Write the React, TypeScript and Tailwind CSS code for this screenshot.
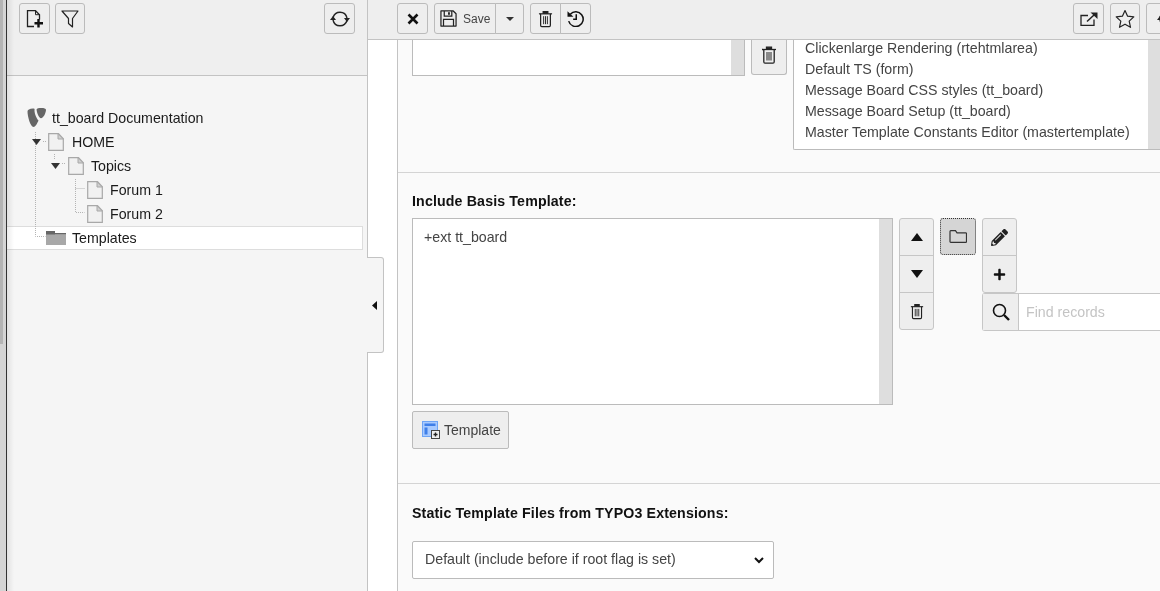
import type { ReactNode } from 'react';
import { FaPencilAlt, FaPlus } from 'react-icons/fa';

// ---------------------------------------------------------------------------
// Icons
// ---------------------------------------------------------------------------

function TrashIcon({ className = 'w-[16px] h-[18px]' }: { className?: string }) {
  return (
    <svg viewBox="0 0 16 18" className={className} fill="none" stroke="#222" strokeWidth="1.3">
      <path d="M1 3.5h14" />
      <path d="M5.5 3.5V1.2h5v2.3" fill="#222" />
      <path d="M2.8 3.5v12.2c0 .8.5 1.5 1.2 1.5h8c.7 0 1.2-.7 1.2-1.5V3.5" />
      <path d="M6 6v8.5M8 6v8.5M10 6v8.5" strokeWidth="1" />
    </svg>
  );
}

function NewPageIcon() {
  return (
    <svg viewBox="0 0 18 18" className="w-[18px] h-[18px]" fill="none">
      <path d="M8 16.500H1.500V.7h8l4 4v4.800" stroke="#222" strokeWidth="1.300" />
      <path d="M9.500.7v4h4" stroke="#222" strokeWidth="1" />
      <path d="M12.500 9v8.500M8.500 13.300h8.500" stroke="#111" strokeWidth="2.400" />
    </svg>
  );
}

function FilterIcon() {
  return (
    <svg viewBox="0 0 18 18" className="w-[18px] h-[18px]" fill="none" stroke="#222" strokeWidth="1.200">
      <path d="M1 1h16l-5.500 7.500v8.500L7.500 13.500V8.500z" strokeLinejoin="round" />
    </svg>
  );
}

function ShareIcon() {
  return (
    <svg viewBox="0 0 18 14" className="w-[18px] h-[14px]" fill="none" stroke="#222">
      <path d="M8 3.500H1v10h13V7.500" strokeWidth="1.300" />
      <path d="M7 9.500l7-6.500" strokeWidth="1.500" />
      <path d="M10.500 0.500h7v6.500z" fill="#222" stroke="none" />
    </svg>
  );
}

function SyncIcon() {
  return (
    <svg viewBox="0 0 20 16" className="w-[20px] h-[16px]" fill="none" stroke="#222" strokeWidth="1.400">
      <path d="M3 6.500C4 3.300 6.800 1.200 10 1.200c3.300 0 6.200 2.300 7 5.800" />
      <path d="M17 9.500c-1 3.200-3.800 5.300-7 5.300-3.300 0-6.200-2.300-7-5.800" />
      <path d="M14 7h6l-3 4zM0 9h6L3 5z" fill="#222" stroke="none" />
    </svg>
  );
}

function SaveIcon() {
  return (
    <svg viewBox="0 0 18 18" className="w-[17px] h-[17px] shrink-0" fill="none" stroke="#222" strokeWidth="1.300">
      <path d="M1 1h13l3 3v13H1z" strokeLinejoin="round" />
      <path d="M4.500 1v5.500h8V1" />
      <path d="M9.500 2.500v2.500" strokeWidth="2" />
      <path d="M3.700 17v-7h10.600v7" />
    </svg>
  );
}

function HistoryIcon() {
  return (
    <svg viewBox="0 0 18 18" className="w-[17px] h-[17px]" fill="none" stroke="#111" strokeWidth="1.600">
      <path d="M3.500 4.500A7.800 7.800 0 1 1 1.800 11.800" />
      <path d="M0.500 1.200l6.300 6H0.500z" fill="#111" stroke="none" />
      <path d="M9.800 4.500v5.300H6.500" />
    </svg>
  );
}

function StarIcon() {
  return (
    <svg viewBox="0 0 20 20" className="w-[20px] h-[20px]" fill="none" stroke="#222" strokeWidth="1.200">
      <path d="M10 1.500l2.600 5.700 6.200.7-4.600 4.200 1.300 6.200L10 15.200l-5.500 3.100 1.300-6.200-4.600-4.200 6.200-.7z" strokeLinejoin="round" />
    </svg>
  );
}

function FolderOutline() {
  return (
    <svg viewBox="0 0 18 13" className="w-[18px] h-[13px]" fill="none" stroke="#333" strokeWidth="1.200">
      <path d="M1 1.500c0-.5.300-.9.800-.9h4.700l1.500 2.200h8.700c.5 0 .8.300.8.800v8c0 .5-.3.800-.8.800H1.800c-.5 0-.8-.3-.8-.8z" />
    </svg>
  );
}

function SearchIcon() {
  return (
    <svg viewBox="0 0 18 18" className="w-[18px] h-[18px]" fill="none" stroke="#111">
      <circle cx="7.500" cy="7.500" r="6" strokeWidth="1.600" />
      <path d="M12 12l5 5" strokeWidth="2.400" />
    </svg>
  );
}

function PageIcon() {
  return (
    <svg viewBox="0 0 16 18" className="w-[16px] h-[18px] shrink-0">
      <path d="M.7.700h9.800l4.800 5v11.600H.7z" fill="#f1f1f1" stroke="#a8a8a8" strokeWidth="1.200" />
      <path d="M10 .700v5.300h5.300z" fill="#cfcfcf" stroke="#a8a8a8" />
    </svg>
  );
}

function FolderIcon() {
  return (
    <svg viewBox="0 0 20 14" className="w-[20px] h-[14px] shrink-0">
      <path d="M0 0h9v3h11v11H0z" fill="#a8a8a8" />
      <path d="M0 0h9v3.500H0z" fill="#666" />
      <path d="M9 2h11v1.200H9z" fill="#666" />
    </svg>
  );
}

function Typo3Icon() {
  return (
    <svg viewBox="0 0 20 20" className="w-[20px] h-[20px] shrink-0" fill="#666">
      <path d="M.5 3.500C.5 2 2.500.8 6 .6c1 0 1.600.2 1.600.6C7 4 9 10 11.500 12.500c-1.400 3.200-3.200 6.500-5 6.500C3.500 19 .5 8.500.5 3.500z" />
      <path d="M9.600 1.200C10 .4 11.500 0 14.500 0c2.500 0 4.500.6 4.500 1.800 0 3-2.500 8.500-5 8.500-2 0-4.400-6.200-4.400-9.100z" />
    </svg>
  );
}

function TemplateIcon() {
  return (
    <svg viewBox="0 0 18 18" className="w-[18px] h-[18px]">
      <rect x="0.500" y="0.500" width="15" height="15" fill="#a9cbff" stroke="#6ea4f5" />
      <path d="M2.500 2.500h11v2.500h-11zM2.500 6.500h3v7h-3z" fill="#3f7fe8" />
      <rect x="9.500" y="9.500" width="8" height="8" fill="#eee" stroke="#444" />
      <path d="M13.500 11.500v4M11.500 13.500h4" stroke="#222" strokeWidth="1.400" />
    </svg>
  );
}

function Triangle({ down = false }: { down?: boolean }) {
  return (
    <svg viewBox="0 0 12 8" className="w-[12px] h-[8px]" fill="#111">
      <path d={down ? 'M0 0h12L6 8z' : 'M0 8h12L6 0z'} />
    </svg>
  );
}

function TreeToggle() {
  return (
    <svg viewBox="0 0 9 6" className="w-[9px] h-[6px]" fill="#333">
      <path d="M0 0h9L4.500 6z" />
    </svg>
  );
}

// ---------------------------------------------------------------------------
// Small parts
// ---------------------------------------------------------------------------

function ToolButton({ children, className = 'w-[31px]' }: { children: ReactNode; className?: string }) {
  return (
    <button className={`h-[31px] flex items-center justify-center bg-[#eeeeee] border border-[#bbbbbb] rounded-[3px] text-[#222] shrink-0 ${className}`}>
      {children}
    </button>
  );
}

function TreeRow({ depth, label, icon, selected }: { depth: string; label: string; icon: ReactNode; selected?: boolean }) {
  return (
    <div className={`h-[24px] flex items-center ${depth} ${selected ? 'bg-white border-y border-r border-[#dddddd] mr-[4px]' : ''}`}>
      {icon}
      <span className="pt-[2px] text-[14.200px] text-[#1a1a1a]">{label}</span>
    </div>
  );
}

// ---------------------------------------------------------------------------
// App
// ---------------------------------------------------------------------------

export default function App() {
  return (
    <div className="relative flex w-[1160px] h-[591px] overflow-hidden bg-white font-['Liberation_Sans',Arial,sans-serif]">
      {/* Window edge */}
      <div className="flex w-[7px] shrink-0 bg-[#d4d4d4]">
        <div className="w-[3px] h-[344px] bg-[#b4b4b4]" />
        <div className="flex-1" />
        <div className="w-[1px] bg-[#333333]" />
      </div>

      {/* Page tree */}
      <div className="flex flex-col w-[361px] shrink-0 border-r border-[#c3c3c3] bg-[#f5f5f5]">
        <div className="h-[72px] shrink-0 flex items-start justify-between pl-[12px] pr-[12px] pt-[3px] bg-[#efefef] border-b border-[#c3c3c3] box-content">
          <div className="flex gap-[5px]">
            <ToolButton><NewPageIcon /></ToolButton>
            <ToolButton className="w-[30px]"><FilterIcon /></ToolButton>
          </div>
          <ToolButton><SyncIcon /></ToolButton>
        </div>

        <div className="relative pt-[30px]">
          <svg className="absolute left-0 top-0 w-[120px] h-[170px]" fill="none" stroke="#b4b4b4" strokeDasharray="1 1">
            <path d="M28.500 56v104.500h10M36 65.500h4M47.500 78v6M55 87.500h4M68.500 103v33.500h9M68.500 112.500h9" />
          </svg>
          <TreeRow depth="pl-[20px] gap-[5px]" label="tt_board Documentation" icon={<Typo3Icon />} />
          <div className="relative">
            <div className="absolute left-[25px] top-[9px] flex"><TreeToggle /></div>
            <TreeRow depth="pl-[41px] gap-[8px]" label="HOME" icon={<PageIcon />} />
          </div>
          <div className="relative">
            <div className="absolute left-[44px] top-[9px] flex"><TreeToggle /></div>
            <TreeRow depth="pl-[61px] gap-[7px]" label="Topics" icon={<PageIcon />} />
          </div>
          <TreeRow depth="pl-[80px] gap-[7px]" label="Forum 1" icon={<PageIcon />} />
          <TreeRow depth="pl-[80px] gap-[7px]" label="Forum 2" icon={<PageIcon />} />
          <TreeRow depth="pl-[39px] gap-[6px]" label="Templates" icon={<FolderIcon />} selected />
        </div>
      </div>

      {/* Shadow over the tree's left edge */}
      <div className="absolute left-[7px] top-0 w-[7px] h-full pointer-events-none mix-blend-multiply bg-linear-to-r from-[#ececec] to-white" />

      {/* Collapse handle */}
      <div className="absolute left-[367px] top-[257px] w-[17px] h-[96px] flex items-center justify-end pr-[6px] bg-[#f5f5f5] border border-l-0 border-[#c3c3c3] rounded-r-[3px]">
        <svg viewBox="0 0 5 9" className="w-[5px] h-[9px]" fill="#111"><path d="M5 0v9L0 4.500z" /></svg>
      </div>

      {/* Main column */}
      <div className="flex flex-col flex-1 min-w-0">
        <div className="h-[40px] shrink-0 flex items-start justify-between pl-[29px] pt-[3px] bg-[#eeeeee] border-b border-[#c3c3c3] overflow-hidden">
          <div className="flex gap-[6px]">
            <ToolButton>
              <svg viewBox="0 0 12 12" className="w-[12px] h-[12px]" fill="none" stroke="#111" strokeWidth="2.600"><path d="M1.500 1.500l9 9M10.500 1.500l-9 9" /></svg>
            </ToolButton>
            <div className="flex">
              <button className="h-[31px] w-[62px] flex items-center gap-[6px] pl-[5px] bg-[#eeeeee] border border-[#bbbbbb] rounded-l-[3px] text-[12px] text-[#444]">
                <SaveIcon />
                <span>Save</span>
              </button>
              <button className="h-[31px] w-[29px] -ml-px flex items-center justify-center bg-[#eeeeee] border border-[#bbbbbb] rounded-r-[3px]">
                <svg viewBox="0 0 8 4" className="w-[8px] h-[4px]" fill="#333"><path d="M0 0h8L4 4z" /></svg>
              </button>
            </div>
            <div className="flex">
              <ToolButton className="w-[31px] rounded-r-none"><TrashIcon className="w-[15px] h-[18px]" /></ToolButton>
              <ToolButton className="w-[31px] -ml-px rounded-l-none"><HistoryIcon /></ToolButton>
            </div>
          </div>
          <div className="flex gap-[6px] -mr-[28px]">
            <ToolButton><ShareIcon /></ToolButton>
            <ToolButton className="w-[30px]"><StarIcon /></ToolButton>
            <ToolButton className="w-[42px]"><SyncIcon /></ToolButton>
          </div>
        </div>

        <div className="flex flex-1 min-h-0">
          <div className="w-[29px] shrink-0 bg-white border-r border-[#c3c3c3] box-content" />
          <div className="flex-1 min-w-0 bg-[#fafafa] overflow-hidden">
            {/* Clipped first field */}
            <div className="h-[133px] flex items-start gap-[6px] pl-[14px] border-b border-[#d4d4d4]">
              <div className="flex h-[36px] w-[333px] shrink-0 bg-white border-x border-b border-[#bbbbbb]">
                <div className="flex-1" />
                <div className="w-[13px] bg-[#dedede]" />
              </div>
              <button className="h-[35px] w-[36px] shrink-0 flex items-center justify-center pb-[4px] bg-[#eeeeee] border-x border-b border-[#bbbbbb] rounded-b-[3px]">
                <TrashIcon />
              </button>
              <div className="flex h-[110px] flex-1 min-w-0 -mr-[10px] bg-white border-l border-b border-[#bbbbbb] rounded-bl-[2px]">
                <div className="flex-1 pl-[11px] -mt-[2px] text-[14.200px] leading-[21px] text-[#444] whitespace-nowrap">
                  <div>Clickenlarge Rendering (rtehtmlarea)</div>
                  <div>Default TS (form)</div>
                  <div>Message Board CSS styles (tt_board)</div>
                  <div>Message Board Setup (tt_board)</div>
                  <div>Master Template Constants Editor (mastertemplate)</div>
                </div>
                <div className="w-[22px] shrink-0 bg-[#dedede]" />
              </div>
            </div>

            {/* Include Basis Template */}
            <div className="h-[311px] pl-[14px] pt-[20px] border-b border-[#d4d4d4]">
              <div className="h-[17px] text-[14.200px] tracking-[0.14px] leading-[17px] font-bold text-[#111]">Include Basis Template:</div>
              <div className="flex items-start mt-[8px]">
                <div className="flex h-[187px] w-[481px] shrink-0 bg-white border border-[#bbbbbb]">
                  <div className="flex-1 pl-[11px] pt-[9px] text-[14.200px] leading-[18px] text-[#444]">+ext tt_board</div>
                  <div className="w-[13px] bg-[#dedede]" />
                </div>
                <div className="flex flex-col w-[35px] ml-[6px] shrink-0 border border-[#c6c6c6] rounded-[3px] bg-[#eeeeee] divide-y divide-[#c6c6c6]">
                  <div className="h-[37px] flex items-center justify-center"><Triangle /></div>
                  <div className="h-[37px] flex items-center justify-center"><Triangle down /></div>
                  <div className="h-[36px] flex items-center justify-center"><TrashIcon className="w-[14px] h-[17px]" /></div>
                </div>
                <div className="w-[36px] h-[37px] ml-[6px] shrink-0 flex items-center justify-center bg-[#d5d5d5] border border-dotted border-[#333] rounded-[3px]">
                  <FolderOutline />
                </div>
                <div className="ml-[6px] flex-1 min-w-0">
                  <div className="flex flex-col w-[35px] border border-[#c6c6c6] rounded-[3px] bg-[#eeeeee] divide-y divide-[#c6c6c6]">
                    <div className="h-[37px] flex items-center justify-center"><FaPencilAlt className="w-[17px] h-[17px] text-[#222]" /></div>
                    <div className="h-[36px] flex items-center justify-center"><FaPlus className="w-[13px] h-[13px] text-[#111]" /></div>
                  </div>
                  <div className="flex h-[38px] -mr-[10px] bg-white border-y border-l border-[#c6c6c6] rounded-l-[3px]">
                    <div className="w-[36px] shrink-0 flex items-center justify-center bg-[#eeeeee] border-r border-[#c6c6c6]">
                      <SearchIcon />
                    </div>
                    <div className="flex-1 flex items-center pl-[7px] pt-[2px] text-[14.200px] text-[#c4c4c4]">Find records</div>
                  </div>
                </div>
              </div>
              <button className="h-[38px] w-[97px] mt-[6px] flex items-center gap-[4px] pl-[9px] bg-[#eeeeee] border border-[#bbbbbb] rounded-[2px] text-[14px] text-[#444]">
                <TemplateIcon />
                <span>Template</span>
              </button>
            </div>

            {/* Static templates */}
            <div className="pl-[14px] pt-[21px]">
              <div className="h-[17px] text-[14.200px] tracking-[0.14px] leading-[17px] font-bold text-[#111]">Static Template Files from TYPO3 Extensions:</div>
              <div className="flex items-center justify-between h-[38px] w-[362px] mt-[19px] pl-[12px] pr-[9px] bg-white border border-[#bbbbbb] rounded-[2px] text-[14.200px] text-[#444]">
                <span>Default (include before if root flag is set)</span>
                <svg viewBox="0 0 10 7" className="w-[10px] h-[7px]" fill="none" stroke="#111" strokeWidth="2"><path d="M1 1l4 4 4-4" /></svg>
              </div>
            </div>
          </div>
        </div>
      </div>
    </div>
  );
}
